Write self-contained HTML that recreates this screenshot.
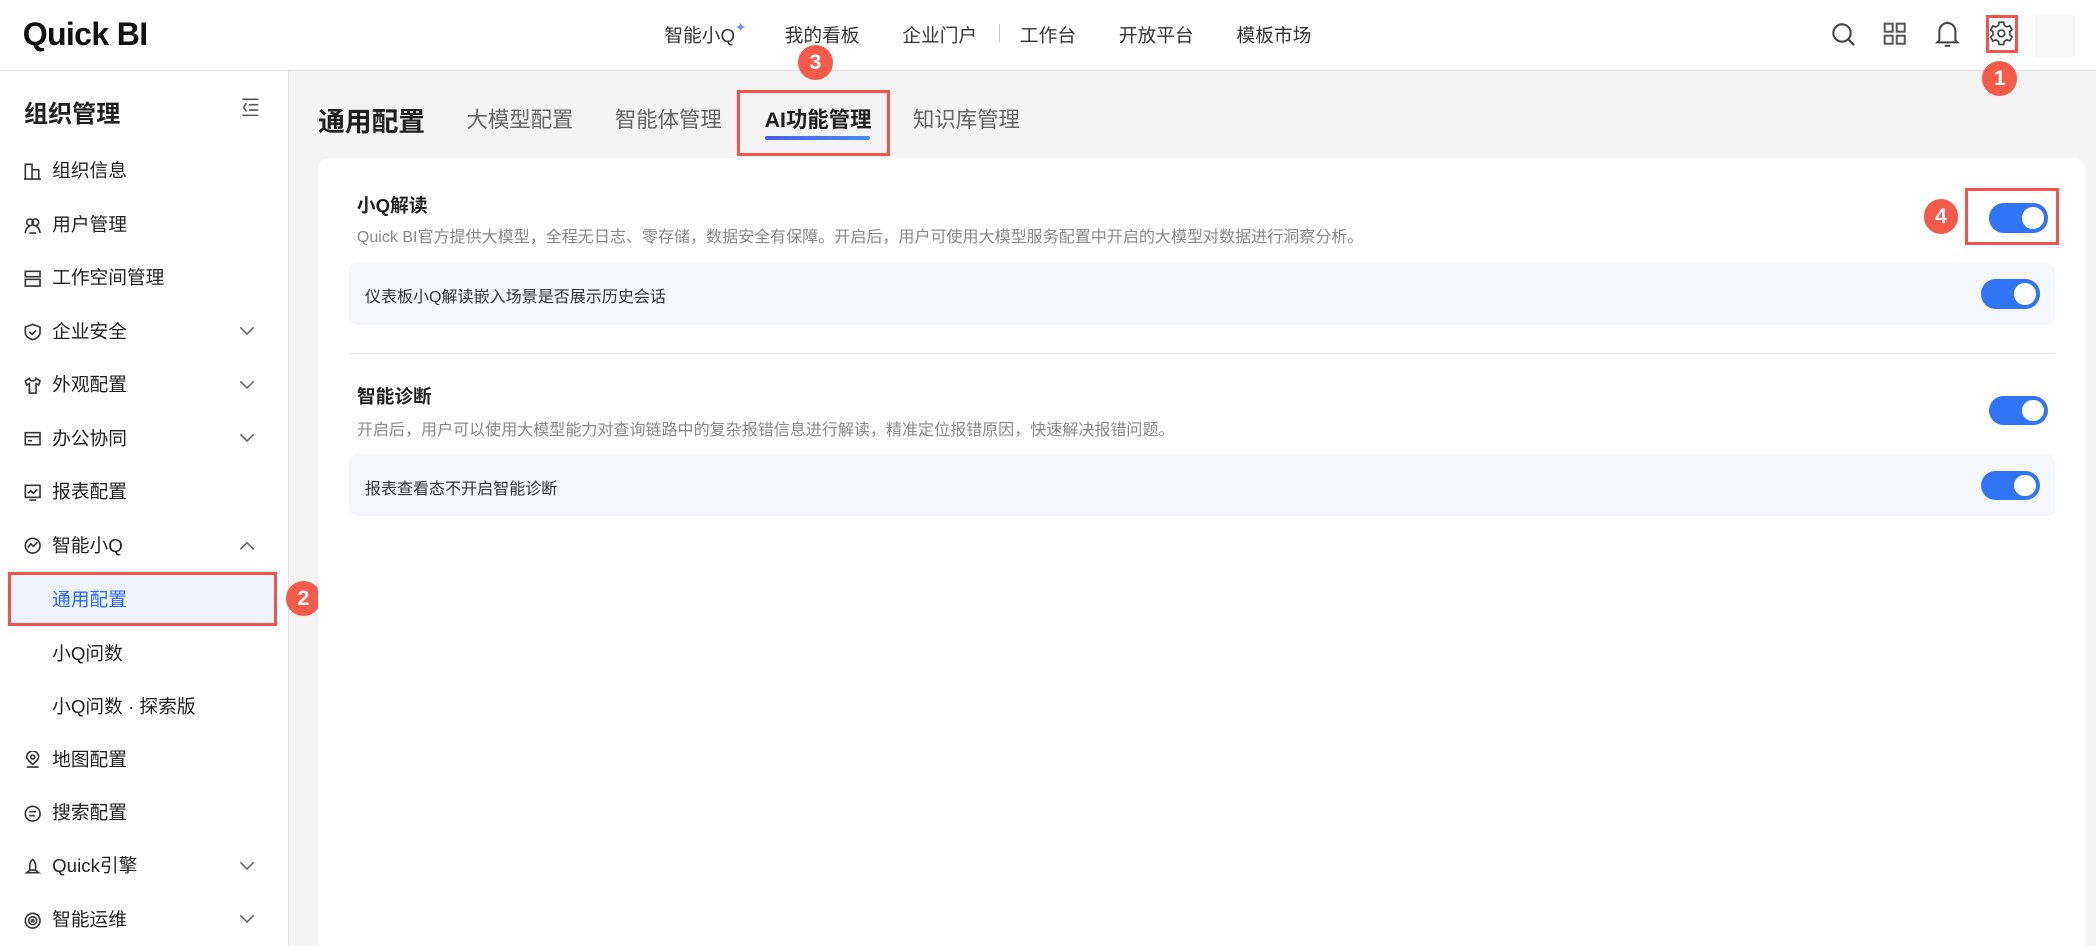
<!DOCTYPE html>
<html><head><meta charset="utf-8"><style>
*{box-sizing:border-box;margin:0;padding:0}
html,body{width:2096px;height:946px;overflow:hidden;background:#fff}
body{font-family:"Liberation Sans","Noto Sans CJK SC",sans-serif;color:#1f1f1f}
#w{width:1568px;height:708px;zoom:1.33673;position:relative;background:#f4f4f5;overflow:hidden}
.a{position:absolute;white-space:nowrap}
.hdr{left:0;top:0;width:1568px;height:53px;background:#fff;border-bottom:1px solid #dcdcdc}
.nav{top:16px;font-size:14px;color:#333}
.side{left:0;top:53px;width:216px;height:655px;background:#fff;border-right:1px solid #e4e4e4}
.mi{left:0;width:216px;height:40px;font-size:14px;color:#1f1f1f;line-height:40px}
.mi .t{position:absolute;left:39px}
.mi svg{position:absolute;left:18px;top:14px}
.mi .ch{position:absolute;left:179px;top:16px}
.badge{width:26px;height:26px;border-radius:50%;background:#f45b4b;color:#fff;font-weight:bold;font-size:16px;text-align:center;line-height:26px}
.rb{border:2.5px solid #f0544b}
.tab{top:77px;font-size:16px;color:#666}
.tg{width:44px;height:22px;border-radius:11px;background:#3274f6}
.tg:after{content:"";position:absolute;right:3px;top:3px;width:16px;height:16px;border-radius:50%;background:#fff}
.sub{left:261px;width:1276px;height:46px;background:#f6f7fa;border-radius:6px}
</style></head><body><div id="w">
<div class="a hdr"></div>
<div class="a" style="left:17px;top:12px;font-size:24px;font-weight:bold;letter-spacing:-0.5px;color:#111">Quick BI</div>
<div class="a nav" style="left:497px">智能小Q<span style="color:#6c8dff;font-size:10px;position:relative;top:-8px">✦</span></div>
<div class="a nav" style="left:587px">我的看板</div>
<div class="a nav" style="left:675px">企业门户</div>
<div class="a" style="left:747px;top:18px;width:1px;height:14px;background:#ccc"></div>
<div class="a nav" style="left:763px">工作台</div>
<div class="a nav" style="left:837px">开放平台</div>
<div class="a nav" style="left:925px">模板市场</div>
<svg class="a" style="left:1369px;top:16px" width="20" height="20" viewBox="0 0 20 20" fill="none" stroke="#444" stroke-width="1.6"><circle cx="9" cy="9" r="6.5"/><path d="M14 14l4 4"/></svg>
<svg class="a" style="left:1408px;top:16px" width="20" height="20" viewBox="0 0 20 20" fill="none" stroke="#555" stroke-width="1.5"><rect x="2" y="2" width="6" height="6"/><rect x="11" y="2" width="6" height="6"/><rect x="2" y="11" width="6" height="6"/><rect x="11" y="11" width="6" height="6"/></svg>
<svg class="a" style="left:1447px;top:14px" width="20" height="22" viewBox="0 0 20 22" fill="none" stroke="#444" stroke-width="1.5"><path d="M4 16V9a6 6 0 0112 0v7l1.5 1.5h-15z"/><path d="M8 20h4M10 2v1"/></svg>
<svg class="a" style="left:1487px;top:15px" width="20" height="20" viewBox="0 0 24 24" fill="none" stroke="#444" stroke-width="1.5"><path d="M10 2h4l.6 2.8 2.3 1.3 2.7-.9 2 3.5-2.1 1.9v2.7l2.1 1.9-2 3.5-2.7-.9-2.3 1.3L14 22h-4l-.6-2.8-2.3-1.3-2.7.9-2-3.5 2.1-1.9V10.7L2.4 8.8l2-3.5 2.7.9 2.3-1.3z"/><circle cx="12" cy="12" r="3"/></svg>
<div class="a rb" style="left:1486px;top:11px;width:24px;height:29px"></div>
<div class="a" style="left:1522px;top:11px;width:30px;height:32px;background:#f7f7f7"></div>
<div class="a badge" style="left:1483px;top:46px">1</div>

<div class="a side"></div>
<div class="a" style="left:18px;top:70px;font-size:18px;font-weight:bold">组织管理</div>
<svg class="a" style="left:180px;top:73px" width="14" height="14" viewBox="0 0 14 14" fill="none" stroke="#555" stroke-width="1.2"><path d="M1 1h12M6 5h7M6 9h7M1 13h12M4 4L2 7l2 3"/></svg>

<div class="a mi" style="top:108px"><svg width="13" height="13" viewBox="0 0 13 13" fill="none" stroke="#333" stroke-width="1.2"><path d="M1 12V1h5v11M6 5h5v7M0 12h13"/></svg><span class="t">组织信息</span></div>
<div class="a mi" style="top:148px"><svg width="13" height="13" viewBox="0 0 13 13" fill="none" stroke="#333" stroke-width="1.2"><circle cx="4.5" cy="4" r="2.5"/><circle cx="8.5" cy="4" r="2.5"/><path d="M1 12c0-3 2-5 3.5-5M12 12c0-3-2-5-3.5-5M4 12h5"/></svg><span class="t">用户管理</span></div>
<div class="a mi" style="top:188px"><svg width="13" height="13" viewBox="0 0 13 13" fill="none" stroke="#333" stroke-width="1.2"><rect x="1" y="1" width="11" height="4"/><rect x="1" y="7" width="11" height="5"/></svg><span class="t">工作空间管理</span></div>
<div class="a mi" style="top:228px"><svg width="13" height="13" viewBox="0 0 13 13" fill="none" stroke="#333" stroke-width="1.2"><path d="M6.5 1L12 3v4c0 3-3 5-5.5 5.5C4 12 1 10 1 7V3z"/><path d="M4 6.5l2 2 3-3"/></svg><span class="t">企业安全</span><svg class="ch" width="12" height="8" viewBox="0 0 12 8" fill="none" stroke="#666" stroke-width="1.2"><path d="M1 1l5 5 5-5"/></svg></div>
<div class="a mi" style="top:268px"><svg width="13" height="13" viewBox="0 0 13 13" fill="none" stroke="#333" stroke-width="1.2"><path d="M4 1L1 3l1 3 2-1v7h5V5l2 1 1-3-3-2c0 1-1 2-2.5 2S4 2 4 1z"/></svg><span class="t">外观配置</span><svg class="ch" width="12" height="8" viewBox="0 0 12 8" fill="none" stroke="#666" stroke-width="1.2"><path d="M1 1l5 5 5-5"/></svg></div>
<div class="a mi" style="top:308px"><svg width="13" height="13" viewBox="0 0 13 13" fill="none" stroke="#333" stroke-width="1.2"><rect x="1" y="2" width="11" height="9"/><path d="M1 5h11M3 8h3"/></svg><span class="t">办公协同</span><svg class="ch" width="12" height="8" viewBox="0 0 12 8" fill="none" stroke="#666" stroke-width="1.2"><path d="M1 1l5 5 5-5"/></svg></div>
<div class="a mi" style="top:348px"><svg width="13" height="13" viewBox="0 0 13 13" fill="none" stroke="#333" stroke-width="1.2"><rect x="1" y="1" width="11" height="9"/><path d="M3 7l2-2 2 2 3-3M4 12h5"/></svg><span class="t">报表配置</span></div>
<div class="a mi" style="top:388px"><svg width="13" height="13" viewBox="0 0 13 13" fill="none" stroke="#333" stroke-width="1.2"><circle cx="6.5" cy="6.5" r="5.5"/><path d="M3 8l2-3 2 2 3-3"/></svg><span class="t">智能小Q</span><svg class="ch" width="12" height="8" viewBox="0 0 12 8" fill="none" stroke="#666" stroke-width="1.2"><path d="M1 7l5-5 5 5"/></svg></div>
<div class="a" style="left:6px;top:428px;width:201px;height:40px;background:#eef3ff"></div>
<div class="a rb" style="left:6px;top:428px;width:201px;height:40px"></div>
<div class="a" style="left:39px;top:438px;font-size:14px;color:#2a6af5">通用配置</div>
<div class="a badge" style="left:214px;top:435px">2</div>
<div class="a" style="left:39px;top:478px;font-size:14px">小Q问数</div>
<div class="a" style="left:39px;top:518px;font-size:14px">小Q问数 · 探索版</div>
<div class="a mi" style="top:548px"><svg width="13" height="13" viewBox="0 0 13 13" fill="none" stroke="#333" stroke-width="1.2"><path d="M6.5 10S2 6.5 2 4.5a4.5 4.5 0 019 0C11 6.5 6.5 10 6.5 10z"/><circle cx="6.5" cy="4.5" r="1.5"/><path d="M2 12h9"/></svg><span class="t">地图配置</span></div>
<div class="a mi" style="top:588px"><svg width="13" height="13" viewBox="0 0 13 13" fill="none" stroke="#333" stroke-width="1.2"><circle cx="6.5" cy="6.5" r="5.5"/><path d="M4 5h5M4 8h4"/></svg><span class="t">搜索配置</span></div>
<div class="a mi" style="top:628px"><svg width="13" height="13" viewBox="0 0 13 13" fill="none" stroke="#333" stroke-width="1.2"><path d="M6.5 1C9 3 9 7 8.5 9h-4C4 7 4 3 6.5 1zM4.5 9L2 11h9L8.5 9"/></svg><span class="t">Quick引擎</span><svg class="ch" width="12" height="8" viewBox="0 0 12 8" fill="none" stroke="#666" stroke-width="1.2"><path d="M1 1l5 5 5-5"/></svg></div>
<div class="a mi" style="top:668px"><svg width="13" height="13" viewBox="0 0 13 13" fill="none" stroke="#333" stroke-width="1.2"><circle cx="6.5" cy="6.5" r="5.5"/><circle cx="6.5" cy="6.5" r="3"/><circle cx="6.5" cy="6.5" r=".8"/></svg><span class="t">智能运维</span><svg class="ch" width="12" height="8" viewBox="0 0 12 8" fill="none" stroke="#666" stroke-width="1.2"><path d="M1 1l5 5 5-5"/></svg></div>

<div class="a" style="left:238px;top:75px;font-size:20px;font-weight:bold">通用配置</div>
<div class="a tab" style="left:349px">大模型配置</div>
<div class="a tab" style="left:460px">智能体管理</div>
<div class="a tab" style="left:572px;color:#1f1f1f;font-weight:bold">AI功能管理</div>
<div class="a" style="left:572px;top:102px;width:79px;height:3px;border-radius:2px;background:linear-gradient(90deg,#4a5cf5,#4a8cf5)"></div>
<div class="a rb" style="left:551px;top:67px;width:115px;height:50px"></div>
<div class="a tab" style="left:683px">知识库管理</div>
<div class="a badge" style="left:597px;top:34px">3</div>

<div class="a" style="left:238px;top:118px;width:1322px;height:600px;background:#fff;border-radius:8px"></div>
<div class="a" style="left:267px;top:143px;font-size:14px;font-weight:bold">小Q解读</div>
<div class="a" style="left:267px;top:167px;font-size:12px;color:#888">Quick BI官方提供大模型，全程无日志、零存储，数据安全有保障。开启后，用户可使用大模型服务配置中开启的大模型对数据进行洞察分析。</div>
<div class="a tg" style="left:1488px;top:152px"></div>
<div class="a rb" style="left:1470px;top:141px;width:70px;height:42px"></div>
<div class="a badge" style="left:1439px;top:149px">4</div>
<div class="a sub" style="top:197px"></div>
<div class="a" style="left:273px;top:212px;font-size:12px;color:#333">仪表板小Q解读嵌入场景是否展示历史会话</div>
<div class="a tg" style="left:1482px;top:209px"></div>
<div class="a" style="left:261px;top:264px;width:1276px;height:1px;background:#e6e6e6"></div>
<div class="a" style="left:267px;top:286px;font-size:14px;font-weight:bold">智能诊断</div>
<div class="a" style="left:267px;top:311px;font-size:12px;color:#888">开启后，用户可以使用大模型能力对查询链路中的复杂报错信息进行解读，精准定位报错原因，快速解决报错问题。</div>
<div class="a tg" style="left:1488px;top:296px"></div>
<div class="a sub" style="top:340px"></div>
<div class="a" style="left:273px;top:355px;font-size:12px;color:#333">报表查看态不开启智能诊断</div>
<div class="a tg" style="left:1482px;top:352px"></div>
</div></body></html>
